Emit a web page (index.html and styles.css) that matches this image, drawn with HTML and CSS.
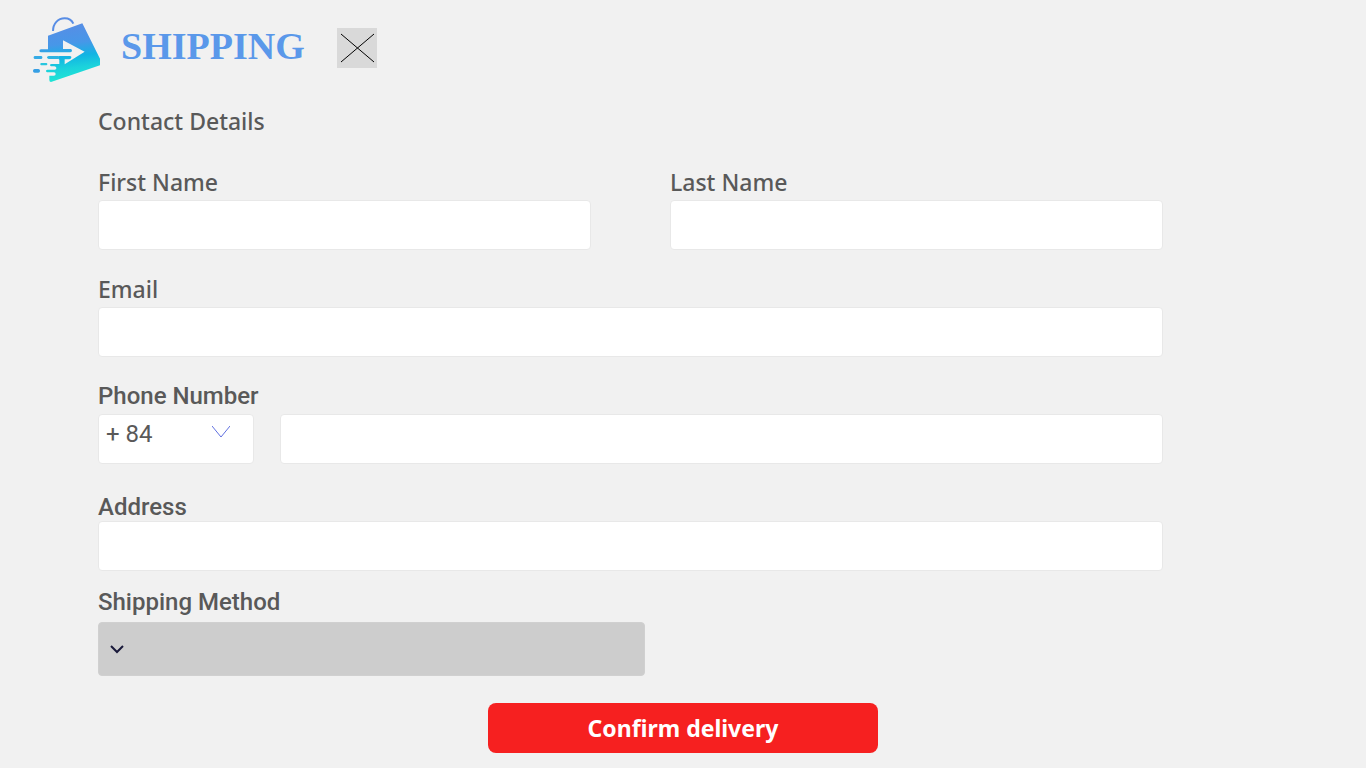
FILE: index.html
```html
<!DOCTYPE html>
<html lang="en">
<head>
  <meta charset="utf-8">
  <meta name="viewport" content="width=device-width, initial-scale=1">
  <title>Shipping</title>
  <link rel="stylesheet" href="styles.css">
</head>
<body>
  <header class="header">
    <svg class="logo" viewBox="39 24 204 201" aria-hidden="true">
      <defs>
        <linearGradient id="bag" gradientUnits="userSpaceOnUse" x1="155" y1="45" x2="175" y2="215">
          <stop offset="0" stop-color="#588de5"/>
          <stop offset="0.35" stop-color="#4797e8"/>
          <stop offset="0.58" stop-color="#12b4e3"/>
          <stop offset="0.78" stop-color="#1bd2dc"/>
          <stop offset="1" stop-color="#1fe6d4"/>
        </linearGradient>
      </defs>
      <path d="M99 69C99 47 114 31 134 31C147 31 155 36 160 47" fill="none" stroke="#588de5" stroke-width="6"/>
      <path fill="url(#bag)" d="M84 83L187 46L240 152V172L93 222Q88 222 88 216V203H102Q107 203 107 198Q107 193 102 193H81Q78 192 78 189Q78 185 83 185H105Q110 184 109 179Q108 176 103 175H93Q90 174 90 171Q90 168 95 168H118V155Q114 153 114 148Q114 144 119 144H150Q155 145 154 149Q153 153 148 154H134V169L194 131L129 97V123H152Q156 124 156 128Q156 132 151 133H62Q58 132 58 129Q58 125 63 124H84Z"/>
      <path fill="#2eb4e2" d="M86 144H116V153H86Q81 152 81 148Q81 145 86 144Z"/>
      <rect x="41" y="144" width="26" height="9" rx="4" fill="#35abe6"/>
      <rect x="61" y="165" width="21" height="7" rx="3" fill="#28c6df"/>
      <rect x="39" y="183" width="21" height="11" rx="5" fill="#369fe4"/>
    </svg>
    <h1 class="title">SHIPPING</h1>
    <button class="close" type="button" aria-label="Close">
      <svg class="close-icon" viewBox="0 0 40 40" aria-hidden="true">
        <path d="M4 6L37 34M37 6L4 34"/>
      </svg>
    </button>
  </header>

  <form class="form">
    <h2 class="section-title">Contact Details</h2>
    <div class="names">
      <div class="field">
        <label class="label" for="first-name">First Name</label>
        <input class="input" id="first-name" type="text">
      </div>
      <div class="field">
        <label class="label" for="last-name">Last Name</label>
        <input class="input" id="last-name" type="text">
      </div>
    </div>
    <div class="field">
      <label class="label" for="email">Email</label>
      <input class="input" id="email" type="email">
    </div>
    <div class="field">
      <label class="label label-alt" for="phone">Phone Number</label>
      <div class="phone">
        <div class="select-wrap">
          <select class="input code" aria-label="Country code">
            <option>+ 84</option>
          </select>
          <svg class="code-arrow" viewBox="0 0 18 14" aria-hidden="true"><path d="M0 1L9 12L18 1"/></svg>
        </div>
        <input class="input" id="phone" type="tel">
      </div>
    </div>
    <div class="field field-address">
      <label class="label label-alt" for="address">Address</label>
      <input class="input" id="address" type="text">
    </div>
    <div class="field field-method">
      <label class="label label-alt" for="method">Shipping Method</label>
      <div class="select-wrap">
        <select class="method" id="method">
          <option value=""></option>
        </select>
        <svg class="method-arrow" viewBox="0 0 14 10" aria-hidden="true"><path d="M1 2L7 8L13 2"/></svg>
      </div>
    </div>
    <button class="confirm" type="submit">Confirm delivery</button>
  </form>
</body>
</html>
```
FILE: styles.css
```css
* {
  box-sizing: border-box;
}

body {
  margin: 0;
  background: #f1f1f1;
  color: #595959;
  font-family: "Noto Sans", "Open Sans", sans-serif;
}

.header {
  display: flex;
  align-items: flex-start;
  padding: 16px 33px 0;
}

.logo {
  width: 68px;
  height: 67px;
}

.title {
  margin: 8px 32px 0 20px;
  color: #5a98ea;
  font: bold 38px/44px "Liberation Serif", serif;
}

.close {
  width: 40px;
  height: 40px;
  margin-top: 12px;
  padding: 0;
  border: 0;
  background: #d9d9d9;
}

.close-icon {
  display: block;
  fill: none;
  stroke: #000;
  stroke-width: 1;
}

.form {
  display: flex;
  flex-direction: column;
  gap: 25px;
  padding: 24px 203px 16px 98px;
}

.section-title {
  margin: 0 0 8px;
  font-size: 23px;
  font-weight: 500;
  line-height: 28px;
}

.names {
  display: grid;
  grid-template-columns: 1fr 1fr;
  gap: 79px;
}

.field {
  display: flex;
  flex-direction: column;
  gap: 4px;
}

.label {
  font-size: 23px;
  font-weight: 500;
  line-height: 28px;
}

.label-alt {
  font-family: Roboto, sans-serif;
  font-size: 24px;
}

.input {
  width: 100%;
  height: 50px;
  padding: 0 8px;
  border: 1px solid #e8e8e8;
  border-radius: 4px;
  background: #fff;
  color: inherit;
  font: 24px Roboto, sans-serif;
}

.phone {
  display: grid;
  grid-template-columns: 156px 1fr;
  gap: 26px;
}

.select-wrap {
  position: relative;
}

.code {
  appearance: none;
  padding: 0 7px 10px;
}

.code-arrow {
  position: absolute;
  top: 11px;
  right: 24px;
  width: 18px;
  height: 14px;
  fill: none;
  stroke: #6070e0;
  stroke-width: 1;
  pointer-events: none;
}

.field-address {
  gap: 0;
  padding-top: 4px;
}

.field-method {
  gap: 6px;
  margin-top: -8px;
}

.method {
  display: block;
  appearance: none;
  width: 547px;
  max-width: 100%;
  height: 54px;
  border: 1px solid #d0d0d0;
  border-radius: 4px;
  background: #cdcdcd;
  font: 24px Roboto, sans-serif;
}

.method-arrow {
  position: absolute;
  top: 22px;
  left: 12px;
  width: 14px;
  height: 10px;
  fill: none;
  stroke: #19193a;
  stroke-width: 2;
  pointer-events: none;
}

.confirm {
  align-self: center;
  width: 390px;
  height: 50px;
  margin: 2px 0 0 105px;
  padding: 0;
  border: 0;
  border-radius: 8px;
  background: #f62020;
  color: #fff;
  font: bold 23px "Noto Sans", "Open Sans", sans-serif;
}
```
